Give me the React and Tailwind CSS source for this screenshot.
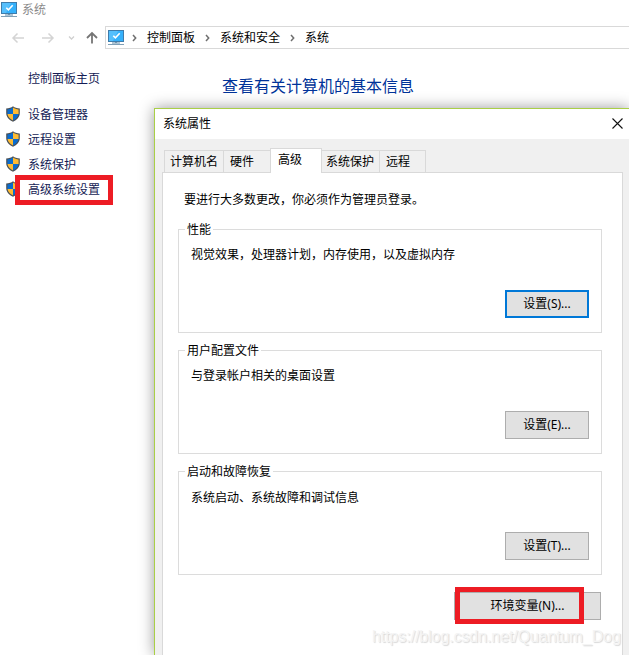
const FONT = "font-['Noto_Sans','Noto_Sans_CJK_SC',sans-serif]";

function MonitorIcon() {
  return (
    <svg width="16" height="16" viewBox="0 0 16 16" className="block shrink-0">
      <rect x="0" y="0" width="16" height="12" fill="#3f7cab" />
      <rect x="1" y="1" width="14" height="10" fill="#35b1fb" />
      <path d="M1 1h9L5 11H1z" fill="#55bffc" />
      <path d="M5.3 5.7l2.100 2.200 4.300-4.600" fill="none" stroke="#fff" strokeWidth="1.600" />
      <rect x="7" y="12" width="2" height="1" fill="#7d9db4" />
      <rect x="4" y="12.500" width="8" height="1" fill="#5f89a8" />
      <rect x="0" y="14" width="16" height="1" fill="#7f9fb6" />
    </svg>
  );
}

function ShieldIcon() {
  return (
    <svg width="14" height="16" viewBox="0 0 14 16" className="block shrink-0">
      <path d="M7 .2C5.400 1.500 3 2.300.2 2.400V7c0 4 2.900 7 6.800 8.800 3.900-1.800 6.800-4.800 6.800-8.800V2.400C11 2.300 8.600 1.500 7 .2z" fill="#4a5056" />
      <path d="M7 1.600C5.500 2.700 3.400 3.400 1.400 3.600V8H7z" fill="#0a6cce" />
      <path d="M7 1.600c1.500 1.100 3.600 1.800 5.600 2V8H7z" fill="#fdbb33" />
      <path d="M1.500 8H7v6.500C4.200 13.100 1.800 10.900 1.500 8z" fill="#fdbb33" />
      <path d="M12.500 8H7v6.500c2.800-1.400 5.200-3.600 5.500-6.500z" fill="#0a6cce" />
    </svg>
  );
}

function Crumb({ className = "" }) {
  return (
    <svg width="5" height="8" viewBox="0 0 5 8" className={`block shrink-0 ${className}`}>
      <path d="M1 1l2.700 3L1 7" fill="none" stroke="#6f6f6f" strokeWidth="1.500" />
    </svg>
  );
}

function NavBar() {
  return (
    <div className="flex h-[23px] items-center text-black">
      <svg width="105" height="23" viewBox="0 0 105 23" fill="none" className="block shrink-0">
        <path d="M24 12H13M17.500 7.500L13 12l4.500 4.500" stroke="#d4d4d4" strokeWidth="1.500" />
        <path d="M42 12h11M48.500 7.500L53 12l-4.500 4.500" stroke="#d4d4d4" strokeWidth="1.500" />
        <path d="M69 10.500l2.500 2.500 2.500-2.500" stroke="#cfcfcf" strokeWidth="1.300" />
        <path d="M92 17.500V7M87 12l5-5 5 5" stroke="#757575" strokeWidth="1.800" />
      </svg>
      <div className="flex h-[23px] flex-1 items-center border border-r-0 border-[#d9d9d9] bg-white pl-[2px]">
        <div className="pt-px">
          <MonitorIcon />
        </div>
        <Crumb className="ml-[8px]" />
        <span className="ml-[10px]">控制面板</span>
        <Crumb className="ml-[10px]" />
        <span className="ml-[10px]">系统和安全</span>
        <Crumb className="ml-[10px]" />
        <span className="ml-[10px]">系统</span>
      </div>
    </div>
  );
}

function Sidebar() {
  return (
    <nav className="w-[222px] shrink-0 pt-[21px] text-[#151c55]">
      <div className="h-[18px] pl-[28px] leading-[18px]">控制面板主页</div>
      <ul className="mt-[14px]">
        {["设备管理器", "远程设置", "系统保护", "高级系统设置"].map((label, i) => (
          <li key={label} className="relative flex h-[25px] items-center pl-[6px]">
            <div className="pb-[1px]">
              <ShieldIcon />
            </div>
            <span className="ml-[8px]">{label}</span>
            {i === 3 && (
              <span className="absolute top-[-2px] left-[15px] h-[30px] w-[98px] border-5 border-[#ed1c24]" />
            )}
          </li>
        ))}
      </ul>
    </nav>
  );
}

function Button({ children, focus }) {
  return (
    <button
      className={`flex h-[28px] w-[84px] items-center justify-center bg-[#e1e1e1] ${
        focus ? "border-2 border-[#0078d7]" : "border border-[#adadad]"
      }`}
    >
      {children}
    </button>
  );
}

function Group({ title, text, button, focus, low }) {
  return (
    <section className="flex h-[104px] w-[424px] flex-col border border-[#dcdcdc]">
      <div className="-mt-[9px] ml-[6px] h-[18px] self-start bg-white px-[2px] leading-[18px]">{title}</div>
      <p className={`ml-[12px] h-[18px] leading-[18px] ${low ? "mt-[8px]" : "mt-[7px]"}`}>{text}</p>
      <div className="mt-auto mr-[12px] mb-[14px] self-end">
        <Button focus={focus}>{button}</Button>
      </div>
    </section>
  );
}

function Dialog() {
  return (
    <div className="absolute top-[108px] left-[154px] flex h-[547px] w-[475px] flex-col border-t border-l border-[#a9cf46] bg-[#f0f0f0] shadow-[0_0_14px_rgba(0,0,0,0.4)]">
      <header className="flex h-[30px] shrink-0 items-center justify-between bg-white pr-[6px] pl-[8px]">
        <span>系统属性</span>
        <svg width="11" height="11" viewBox="0 0 11 11" className="mb-[2px] block">
          <path d="M.5.5l10 10M10.500.5l-10 10" stroke="#111" strokeWidth="1.100" />
        </svg>
      </header>
      <div className="mt-[9px] flex h-[24px] shrink-0 items-end pl-[9px]">
        <div className="flex h-[22px] w-[59px] items-center border-t border-l border-[#d9d9d9] pl-[5px]">计算机名</div>
        <div className="flex h-[22px] w-[47px] items-center border-t border-l border-[#d9d9d9] pl-[6px]">硬件</div>
        <div className="z-10 -mb-px flex h-[25px] w-[52px] items-center border-x border-t border-[#d9d9d9] bg-white pb-[2px] pl-[7px]">高级</div>
        <div className="flex h-[22px] w-[57px] items-center border-t border-[#d9d9d9] pl-[4px] whitespace-nowrap">系统保护</div>
        <div className="flex h-[22px] w-[47px] items-center border-x border-t border-[#d9d9d9] pl-[6px]">远程</div>
      </div>
      <main className="ml-[7px] flex w-[461px] flex-1 flex-col border-x border-t border-[#d9d9d9] bg-white pt-[18px] pl-[15px]">
        <p className="ml-[6px] h-[18px] leading-[18px]">要进行大多数更改，你必须作为管理员登录。</p>
        <div className="mt-[20px] flex flex-col gap-[17px]">
          <Group title="性能" text="视觉效果，处理器计划，内存使用，以及虚拟内存" button="设置(S)..." focus />
          <Group title="用户配置文件" text="与登录帐户相关的桌面设置" button="设置(E)..." />
          <Group title="启动和故障恢复" text="系统启动、系统故障和调试信息" button="设置(T)..." low />
        </div>
        <div className="relative mt-[17px] ml-[276px] w-[147px]">
          <button className="flex h-[28px] w-full items-center justify-center border border-[#adadad] bg-[#e1e1e1]">
            环境变量(N)...
          </button>
          <span className="absolute -top-[5px] left-[1px] h-[37px] w-[129px] border-5 border-[#ed1c24]" />
        </div>
      </main>
    </div>
  );
}

export default function App() {
  return (
    <div className={`relative h-[655px] w-[629px] overflow-hidden bg-white text-[12px] leading-[18px] text-black ${FONT}`}>
      <div className="flex h-[26px] items-start gap-[5px] pl-[1px] text-[#8a8a8a]">
        <div className="pt-[2px]">
          <MonitorIcon />
        </div>
        <span className="pt-[1px]">系统</span>
      </div>
      <NavBar />
      <div className="flex">
        <Sidebar />
        <h1 className="pt-[25px] text-[16px] leading-[24px] text-[#003399]">查看有关计算机的基本信息</h1>
      </div>
      <Dialog />
      <div className="absolute top-[627px] left-[372px] font-['Liberation_Sans',sans-serif] text-[16px] leading-[20px] tracking-[-0.09px] whitespace-nowrap text-[#f4f4f4] [text-shadow:1px_1px_1px_#d8d8d8]">
        https://blog.csdn.net/Quantum_Dog
      </div>
    </div>
  );
}
